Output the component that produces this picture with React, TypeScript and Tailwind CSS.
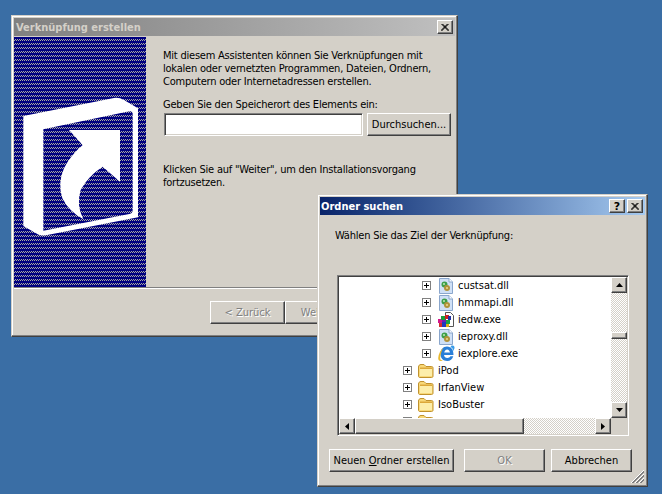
const font = "font-['DejaVu_Sans_Condensed','DejaVu_Sans',sans-serif] text-[11px] leading-[13px] text-black";
const raised =
  "border border-t-white border-l-white border-r-[#404040] border-b-[#404040] bg-[#d4d0c8] shadow-[inset_-1px_-1px_0_#808080,inset_1px_1px_0_#d4d0c8]";
const windowFrame =
  "absolute flex flex-col border border-t-[#d4d0c8] border-l-[#d4d0c8] border-r-[#404040] border-b-[#404040] bg-[#d4d0c8] p-[2px] shadow-[inset_-1px_-1px_0_#808080,inset_1px_1px_0_#fff]";
const track = "bg-[repeating-conic-gradient(#d4d0c8_0_25%,#fff_0_50%)] bg-[size:2px_2px]";

function Arrow({ dir }: { dir: "up" | "down" | "left" | "right" }) {
  const points = {
    up: "0,4 7,4 3.5,0",
    down: "0,0 7,0 3.5,4",
    left: "4,0 4,7 0,3.5",
    right: "0,0 0,7 4,3.5",
  }[dir];
  const vertical = dir === "up" || dir === "down";
  return (
    <svg width={vertical ? 7 : 4} height={vertical ? 4 : 7} viewBox={vertical ? "0 0 7 4" : "0 0 4 7"}>
      <polygon points={points} fill="#000" />
    </svg>
  );
}

function ScrollButton({ dir }: { dir: "up" | "down" | "left" | "right" }) {
  return (
    <div className={`${raised} w-4 h-4 shrink-0 flex items-center justify-center`}>
      <Arrow dir={dir} />
    </div>
  );
}

function CaptionButton({ children }: { children: React.ReactNode }) {
  return (
    <div className={`${raised} w-4 h-[14px] flex items-center justify-center font-['DejaVu_Sans',sans-serif] text-[11px] font-bold text-black`}>
      {children}
    </div>
  );
}

function CloseGlyph() {
  return (
    <svg width="8" height="7" viewBox="0 0 8 7">
      <path d="M0.5 0 L7.5 7 M1.5 0 L8 6.5 M7.5 0 L0.5 7 M6.5 0 L0 6.5" stroke="#000" strokeWidth="1" fill="none" />
    </svg>
  );
}

function Button({ children, disabled, className }: { children: React.ReactNode; disabled?: boolean; className: string }) {
  return (
    <div
      className={`${raised} ${className} h-[23px] flex items-center justify-center ${
        disabled ? "text-[#808080] [text-shadow:1px_1px_0_#fff]" : ""
      }`}
    >
      {children}
    </div>
  );
}

function DllIcon() {
  return (
    <svg width="16" height="16" viewBox="0 0 16 16" className="shrink-0">
      <path d="M1.5 0.5 H11 L14.5 4 V15.5 H1.5 Z" fill="#cfe0f6" stroke="#8aa6cc" />
      <path d="M11 0.5 V4 H14.5" fill="#fff" stroke="#8aa6cc" />
      <circle cx="6.5" cy="6.5" r="3" fill="#3c9e48" />
      <circle cx="9" cy="10" r="3" fill="#b0923a" />
      <circle cx="9" cy="10" r="1.1" fill="#e8d68a" />
      <circle cx="6" cy="6" r="1" fill="#bfe8b8" />
    </svg>
  );
}

function ExeIcon() {
  return (
    <svg width="16" height="16" viewBox="0 0 16 16" className="shrink-0">
      <path d="M7.5 0.5 H12.5 L15.5 3.5 V14.5 H7.5 Z" fill="#fff" stroke="#555" />
      <rect x="0" y="7" width="4" height="4" fill="#d2188c" />
      <rect x="3" y="4" width="4" height="4" fill="#1c9c3c" />
      <rect x="7" y="3" width="4" height="4" fill="#d22020" />
      <rect x="4" y="10" width="4" height="5" fill="#2038c0" />
      <rect x="8" y="8" width="4" height="4" fill="#18a048" />
      <rect x="10" y="4" width="3" height="4" fill="#2030a0" />
      <rect x="8" y="12" width="3" height="3" fill="#e0b010" />
      <rect x="1" y="11" width="3" height="4" fill="#d03030" />
      <rect x="4" y="8" width="4" height="2" fill="#7020b0" />
    </svg>
  );
}

function IeIcon() {
  return (
    <svg width="17" height="17" viewBox="0 0 17 17" className="shrink-0">
      <path d="M9 1.5 C13.5 1.5 15.5 5 15.5 10 H6 C6.2 11.8 7.6 13 9.4 13 C10.8 13 11.8 12.4 12.4 11.3 H15.3 C14.4 14.4 12.2 16 9.2 16 C5.2 16 2.4 13.2 2.4 9 C2.4 4.8 5 1.5 9 1.5 Z M6.2 7.6 H12 C11.8 5.8 10.6 4.4 9.1 4.4 C7.6 4.4 6.5 5.8 6.2 7.6 Z" fill="#2a7fd8" fillRule="evenodd" />
      <path d="M13.5 0.5 C16 0 17 1.4 16.4 3.6 C16 5 15.3 6 14.4 6.8 C15 4.8 15 2.4 12.4 2.2 Z" fill="#3a9ce8" />
      <path d="M5.4 3 C2.6 5 0.4 9 0.2 13 C0.1 16 2.2 16.8 5 15.4 C3 15.4 2 14.6 2.2 12.4 C2.5 9 3.6 5.6 5.4 3 Z" fill="#e8b830" />
    </svg>
  );
}

function FolderIcon() {
  return (
    <svg width="16" height="16" viewBox="0 0 16 16" className="shrink-0">
      <path d="M0.5 4 C0.5 2.5 1.5 1.5 3 1.5 H6 L8 3.5 H13.5 C14.5 3.5 15 4 15 5 V13 C15 14 14.5 14.5 13.5 14.5 H2 C1 14.5 0.5 14 0.5 13 Z" fill="#f8d878" stroke="#c0922e" />
      <rect x="2" y="6" width="12" height="7" fill="#fdeeaa" />
      <path d="M2 4.5 H14 V6 H2 Z" fill="#dca83a" />
    </svg>
  );
}

function PlusBox() {
  return (
    <div className="relative w-[9px] h-[9px] border border-[#808080] bg-white shrink-0">
      <div className="absolute left-[1px] top-[3px] w-[5px] h-px bg-black" />
      <div className="absolute left-[3px] top-[1px] w-px h-[5px] bg-black" />
    </div>
  );
}

const rows = [
  { name: "custsat.dll", icon: <DllIcon />, deep: true },
  { name: "hmmapi.dll", icon: <DllIcon />, deep: true },
  { name: "iedw.exe", icon: <ExeIcon />, deep: true },
  { name: "ieproxy.dll", icon: <DllIcon />, deep: true },
  { name: "iexplore.exe", icon: <IeIcon />, deep: true },
  { name: "iPod", icon: <FolderIcon />, deep: false },
  { name: "IrfanView", icon: <FolderIcon />, deep: false },
  { name: "IsoBuster", icon: <FolderIcon />, deep: false },
  { name: "", icon: <FolderIcon />, deep: false },
];

function TreeRow({ name, icon, deep }: { name: string; icon: React.ReactNode; deep: boolean }) {
  return (
    <div className={`h-[17px] shrink-0 flex items-center ${deep ? "pl-[83px]" : "pl-[64px]"}`}>
      <PlusBox />
      <div className={deep ? "ml-[7px] w-4 flex justify-center" : "ml-[6px] w-4 flex justify-center"}>{icon}</div>
      <span className="ml-[4px]">{name}</span>
    </div>
  );
}

export default function App() {
  return (
    <div className={`relative w-[662px] h-[494px] overflow-hidden bg-[#3a6ea5] ${font}`}>
      {/* assistant window behind */}
      <div className={`${windowFrame} left-[11px] top-[15px] w-[447px] h-[322px]`}>
        <div className="h-[18px] shrink-0 flex items-center justify-between pl-[2px] pr-[2px] bg-gradient-to-r from-[#808080] to-[#c0c0c0]">
          <span className="font-bold text-[#d4d0c8]">Verknüpfung erstellen</span>
          <CaptionButton>
            <CloseGlyph />
          </CaptionButton>
        </div>
        <div className="flex mt-px">
          <div className="w-[132px] h-[250px] shrink-0 flex items-start bg-[linear-gradient(#000080_0_2px,transparent_2px),repeating-conic-gradient(#a8a8a0_0_25%,#000080_0_50%)] bg-[size:4px_4px,2px_2px]">
            <svg width="132" height="150" viewBox="0 0 396 450" className="mt-[53px]">
              <path
                fillRule="evenodd"
                fill="#fff"
                d="M28 78 L300 24 Q316 22 330 30 L372 55 L372 382 L100 435 Q86 438 74 434 L28 408 Z M88 118 L88 422 L346 372 Q356 370 356 360 L356 70 Q356 62 346 64 Z"
              />
              <path
                fill="#fff"
                d="M165 120 L318 120 L318 275 L266 230 Q222 258 200 300 Q186 345 208 388 Q165 365 145 325 Q130 280 150 235 Q170 195 206 165 Z"
              />
            </svg>
          </div>
          <div className="pl-[17px] pt-[12px] flex flex-col tracking-[-0.22px]">
            <p className="w-[290px]">
              Mit diesem Assistenten können Sie Verknüpfungen mit
              <br />
              lokalen oder vernetzten Programmen, Dateien, Ordnern,
              <br />
              Computern oder Internetadressen erstellen.
            </p>
            <p className="mt-[10px]">Geben Sie den Speicherort des Elements ein:</p>
            <div className="mt-[2px] flex items-center tracking-normal">
              <div className="ml-px w-[199px] h-[23px] bg-white border border-t-[#808080] border-l-[#808080] border-r-white border-b-white shadow-[inset_1px_1px_0_#404040,inset_-1px_-1px_0_#d4d0c8]" />
              <Button className="ml-1 w-[84px]">Durchsuchen...</Button>
            </div>
            <p className="mt-[27px]">
              Klicken Sie auf "Weiter", um den Installationsvorgang
              <br />
              fortzusetzen.
            </p>
          </div>
        </div>
        <div className="h-[2px] border-t border-t-[#808080] border-b border-b-white" />
        <div className="mt-[12px] ml-[196px] flex">
          <Button disabled className="w-[75px]">&lt; Zurück</Button>
          <Button disabled className="w-[75px]">Weiter &gt;</Button>
        </div>
      </div>

      {/* folder dialog on top */}
      <div className={`${windowFrame} left-[317px] top-[194px] w-[331px] h-[293px]`}>
        <div className="h-[18px] shrink-0 flex items-center justify-between pl-[1px] pr-[2px] bg-gradient-to-r from-[#0a246a] to-[#a6caf0]">
          <span className="font-bold text-white">Ordner suchen</span>
          <div className="flex gap-[2px]">
            <CaptionButton>?</CaptionButton>
            <CaptionButton>
              <CloseGlyph />
            </CaptionButton>
          </div>
        </div>
        <p className="ml-[15px] mt-[14px] tracking-[-0.22px]">Wählen Sie das Ziel der Verknüpfung:</p>
        <div className="ml-[17px] mt-[33px] w-[292px] h-[161px] flex flex-col border border-t-[#808080] border-l-[#808080] border-r-white border-b-white bg-white shadow-[inset_1px_1px_0_#404040,inset_-1px_-1px_0_#d4d0c8] p-px">
          <div className="flex h-[141px]">
            <div className="flex-1 flex flex-col overflow-hidden">
              {rows.map((r, i) => (
                <TreeRow key={i} name={r.name} icon={r.icon} deep={r.deep} />
              ))}
            </div>
            <div className={`w-4 flex flex-col ${track}`}>
              <ScrollButton dir="up" />
              <div className="h-[39px]" />
              <div className={`${raised} h-[7px]`} />
              <div className="flex-1" />
              <ScrollButton dir="down" />
            </div>
          </div>
          <div className="flex h-4">
            <ScrollButton dir="left" />
            <div className={`flex-1 flex ${track}`}>
              <div className={`${raised} w-[169px]`} />
            </div>
            <ScrollButton dir="right" />
            <div className="w-4 bg-[#d4d0c8]" />
          </div>
        </div>
        <div className="mt-[13px] ml-[9px] flex">
          <Button className="w-[125px]">
            <span>
              Neuen <span className="underline">O</span>rdner erstellen
            </span>
          </Button>
          <Button disabled className="ml-[10px] w-[81px]">OK</Button>
          <Button className="ml-[6px] w-[81px]">Abbrechen</Button>
        </div>
        <svg width="13" height="13" viewBox="0 0 13 13" className="absolute right-[3px] bottom-[3px]">
          <path d="M13 0 L0 13 M13 4 L4 13 M13 8 L8 13" stroke="#fff" fill="none" />
          <path d="M13 1 L1 13 M13 2 L2 13 M13 5 L5 13 M13 6 L6 13 M13 9 L9 13 M13 10 L10 13" stroke="#808080" fill="none" />
        </svg>
      </div>
    </div>
  );
}
